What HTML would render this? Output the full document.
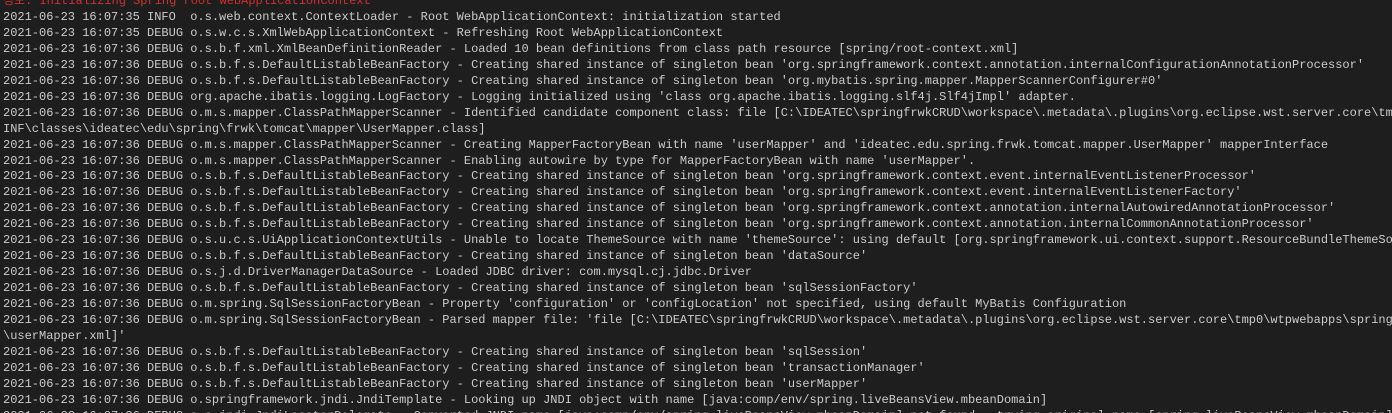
<!DOCTYPE html>
<html><head><meta charset="utf-8"><style>
html,body{margin:0;padding:0;background:#1e1e1e;width:1392px;height:413px;overflow:hidden;position:relative}
pre{margin:0;position:absolute;left:3px;top:-6px;width:1389px;height:419px;overflow:hidden;font-family:"Liberation Mono","Noto Sans CJK KR",monospace;font-size:12px;line-height:15.96px;color:#cccccc;white-space:pre}
.r{color:#d0302f}
</style></head><body><pre><span class="r">정보: Initializing Spring root WebApplicationContext</span>
2021-06-23 16:07:35 INFO  o.s.web.context.ContextLoader - Root WebApplicationContext: initialization started
2021-06-23 16:07:35 DEBUG o.s.w.c.s.XmlWebApplicationContext - Refreshing Root WebApplicationContext
2021-06-23 16:07:36 DEBUG o.s.b.f.xml.XmlBeanDefinitionReader - Loaded 10 bean definitions from class path resource [spring/root-context.xml]
2021-06-23 16:07:36 DEBUG o.s.b.f.s.DefaultListableBeanFactory - Creating shared instance of singleton bean 'org.springframework.context.annotation.internalConfigurationAnnotationProcessor'
2021-06-23 16:07:36 DEBUG o.s.b.f.s.DefaultListableBeanFactory - Creating shared instance of singleton bean 'org.mybatis.spring.mapper.MapperScannerConfigurer#0'
2021-06-23 16:07:36 DEBUG org.apache.ibatis.logging.LogFactory - Logging initialized using 'class org.apache.ibatis.logging.slf4j.Slf4jImpl' adapter.
2021-06-23 16:07:36 DEBUG o.m.s.mapper.ClassPathMapperScanner - Identified candidate component class: file [C:\IDEATEC\springfrwkCRUD\workspace\.metadata\.plugins\org.eclipse.wst.server.core\tmp0\wtpwebapps\
INF\classes\ideatec\edu\spring\frwk\tomcat\mapper\UserMapper.class]
2021-06-23 16:07:36 DEBUG o.m.s.mapper.ClassPathMapperScanner - Creating MapperFactoryBean with name 'userMapper' and 'ideatec.edu.spring.frwk.tomcat.mapper.UserMapper' mapperInterface
2021-06-23 16:07:36 DEBUG o.m.s.mapper.ClassPathMapperScanner - Enabling autowire by type for MapperFactoryBean with name 'userMapper'.
2021-06-23 16:07:36 DEBUG o.s.b.f.s.DefaultListableBeanFactory - Creating shared instance of singleton bean 'org.springframework.context.event.internalEventListenerProcessor'
2021-06-23 16:07:36 DEBUG o.s.b.f.s.DefaultListableBeanFactory - Creating shared instance of singleton bean 'org.springframework.context.event.internalEventListenerFactory'
2021-06-23 16:07:36 DEBUG o.s.b.f.s.DefaultListableBeanFactory - Creating shared instance of singleton bean 'org.springframework.context.annotation.internalAutowiredAnnotationProcessor'
2021-06-23 16:07:36 DEBUG o.s.b.f.s.DefaultListableBeanFactory - Creating shared instance of singleton bean 'org.springframework.context.annotation.internalCommonAnnotationProcessor'
2021-06-23 16:07:36 DEBUG o.s.u.c.s.UiApplicationContextUtils - Unable to locate ThemeSource with name 'themeSource': using default [org.springframework.ui.context.support.ResourceBundleThemeSource]
2021-06-23 16:07:36 DEBUG o.s.b.f.s.DefaultListableBeanFactory - Creating shared instance of singleton bean 'dataSource'
2021-06-23 16:07:36 DEBUG o.s.j.d.DriverManagerDataSource - Loaded JDBC driver: com.mysql.cj.jdbc.Driver
2021-06-23 16:07:36 DEBUG o.s.b.f.s.DefaultListableBeanFactory - Creating shared instance of singleton bean 'sqlSessionFactory'
2021-06-23 16:07:36 DEBUG o.m.spring.SqlSessionFactoryBean - Property 'configuration' or 'configLocation' not specified, using default MyBatis Configuration
2021-06-23 16:07:36 DEBUG o.m.spring.SqlSessionFactoryBean - Parsed mapper file: 'file [C:\IDEATEC\springfrwkCRUD\workspace\.metadata\.plugins\org.eclipse.wst.server.core\tmp0\wtpwebapps\springfrwk
\userMapper.xml]'
2021-06-23 16:07:36 DEBUG o.s.b.f.s.DefaultListableBeanFactory - Creating shared instance of singleton bean 'sqlSession'
2021-06-23 16:07:36 DEBUG o.s.b.f.s.DefaultListableBeanFactory - Creating shared instance of singleton bean 'transactionManager'
2021-06-23 16:07:36 DEBUG o.s.b.f.s.DefaultListableBeanFactory - Creating shared instance of singleton bean 'userMapper'
2021-06-23 16:07:36 DEBUG o.springframework.jndi.JndiTemplate - Looking up JNDI object with name [java:comp/env/spring.liveBeansView.mbeanDomain]
2021-06-23 16:07:36 DEBUG o.s.jndi.JndiLocatorDelegate - Converted JNDI name [java:comp/env/spring.liveBeansView.mbeanDomain] not found - trying original name [spring.liveBeansView.mbeanDomain]. javax.naming.NamingException</pre></body></html>
